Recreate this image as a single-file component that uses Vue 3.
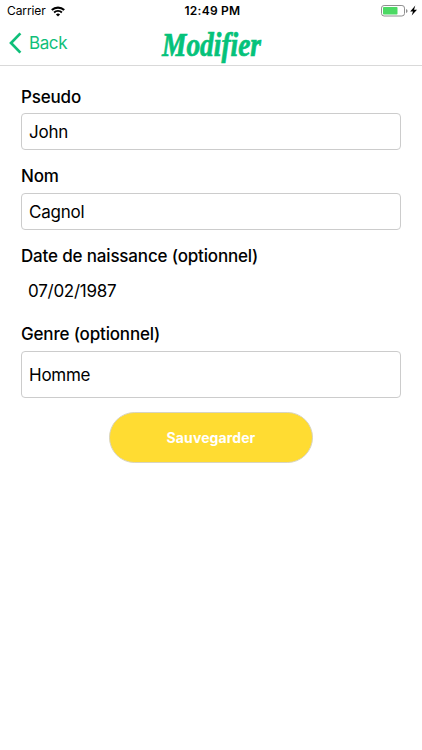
<script setup>
import { ref } from 'vue'

const pseudo = ref('John')
const nom = ref('Cagnol')
const birthDate = ref('07/02/1987')
const gender = ref('Homme')
</script>

<template>
  <div class="screen">
    <header class="header">
      <div class="status">
        <div class="carrier">
          <span>Carrier</span>
          <svg class="wifi" viewBox="0 0 14 11" width="14" height="11">
            <path d="M0.8 4.1 A8.9 8.9 0 0 1 13.2 4.1" fill="none" stroke="#000" stroke-width="2.1" />
            <path d="M3.1 6.5 A5.6 5.6 0 0 1 10.9 6.5" fill="none" stroke="#000" stroke-width="1.9" />
            <path d="M4.9 8.4 A3.1 3.1 0 0 1 9.1 8.4 L7 10.5 Z" fill="#000" />
          </svg>
        </div>
        <div class="clock">12:49 PM</div>
        <div class="power">
          <svg viewBox="0 0 37 12" width="37" height="12">
            <rect x="0.5" y="0.5" width="23" height="10.5" rx="2.6" fill="#fff" stroke="#8f8f8f" />
            <rect x="2" y="2" width="14.5" height="7.5" rx="0.8" fill="#4cd964" />
            <path d="M25 4 Q26.6 4.6 26.6 6 Q26.6 7.4 25 8 Z" fill="#8f8f8f" />
            <path d="M34.3 0.6 L29.2 6.4 H32 L30.7 10.6 L36 4.8 H33 Z" fill="#000" />
          </svg>
        </div>
      </div>
      <nav class="nav">
        <a class="back">
          <svg viewBox="0 0 13 22" width="13" height="22">
            <path d="M11.4 1.4 L2 11 L11.4 20.6" fill="none" stroke="#0fbf7a" stroke-width="2.7" />
          </svg>
          <span>Back</span>
        </a>
        <svg class="title" viewBox="0 0 104 42" width="104" height="42">
          <text x="3" y="32" textLength="99" lengthAdjust="spacingAndGlyphs">Modifier</text>
        </svg>
      </nav>
    </header>

    <main class="form">
      <label class="label first">Pseudo</label>
      <div class="field">{{ pseudo }}</div>
      <label class="label">Nom</label>
      <div class="field">{{ nom }}</div>
      <label class="label">Date de naissance (optionnel)</label>
      <div class="date">{{ birthDate }}</div>
      <label class="label">Genre (optionnel)</label>
      <div class="field select">{{ gender }}</div>
      <button class="save" type="button">Sauvegarder</button>
    </main>
  </div>
</template>

<style>
body {
  margin: 0;
  background: #fff;
}
</style>

<style scoped>
.screen {
  width: 422px;
  height: 750px;
  background: #fff;
  color: #000;
  font-family: Inter, "Liberation Sans", sans-serif;
}
.header {
  box-sizing: border-box;
  height: 66px;
  border-bottom: 1px solid #d9d9d9;
}
.status {
  display: grid;
  grid-template-columns: 1fr auto 1fr;
  align-items: center;
  height: 22px;
  padding: 0 4px 0 7px;
  font-size: 12px;
  line-height: 14px;
}
.carrier {
  display: flex;
  align-items: center;
  gap: 5px;
}
.carrier span {
  letter-spacing: -0.1px;
}
.clock {
  font-weight: 600;
  letter-spacing: 0.25px;
}
.power {
  display: flex;
  justify-content: flex-end;
}
.nav {
  display: grid;
  grid-template-columns: 159px 104px 1fr;
  height: 43px;
}
.back {
  display: flex;
  align-items: center;
  gap: 6px;
  height: 42px;
  padding-left: 9px;
  color: #0fbf7a;
  font-size: 17px;
  letter-spacing: -0.4px;
}
.back span {
  padding-left: 1px;
}
.title {
  margin-top: 2px;
  overflow: visible;
}
.title text {
  font-family: "Liberation Serif", serif;
  font-size: 33px;
  font-style: italic;
  font-weight: 700;
  fill: #05c27a;
  stroke: #05c27a;
  stroke-width: 0.7px;
}
.form {
  display: flex;
  flex-direction: column;
  padding: 20px 21px 0;
}
.label {
  height: 22px;
  margin-bottom: 5px;
  line-height: 21px;
  font-size: 17px;
  font-weight: 500;
  letter-spacing: -0.17px;
}
.first {
  line-height: 22px;
}
.field {
  box-sizing: border-box;
  height: 37px;
  margin-bottom: 16px;
  padding: 0 7px;
  border: 1px solid #ccc;
  border-radius: 4px;
  line-height: 36px;
  font-size: 17px;
  letter-spacing: -0.25px;
}
.date {
  height: 36px;
  margin-bottom: 15px;
  padding-left: 7px;
  line-height: 36px;
  font-size: 17px;
  letter-spacing: -0.25px;
}
.select {
  height: 47px;
  margin-bottom: 14px;
  line-height: 47px;
}
.save {
  align-self: center;
  box-sizing: border-box;
  width: 204px;
  height: 51px;
  padding: 0;
  border: 1px solid #d8d4c0;
  border-radius: 26px;
  background: #ffdc32;
  color: #fff;
  font-family: inherit;
  font-size: 14px;
  font-weight: 700;
  letter-spacing: 0.1px;
}
</style>
